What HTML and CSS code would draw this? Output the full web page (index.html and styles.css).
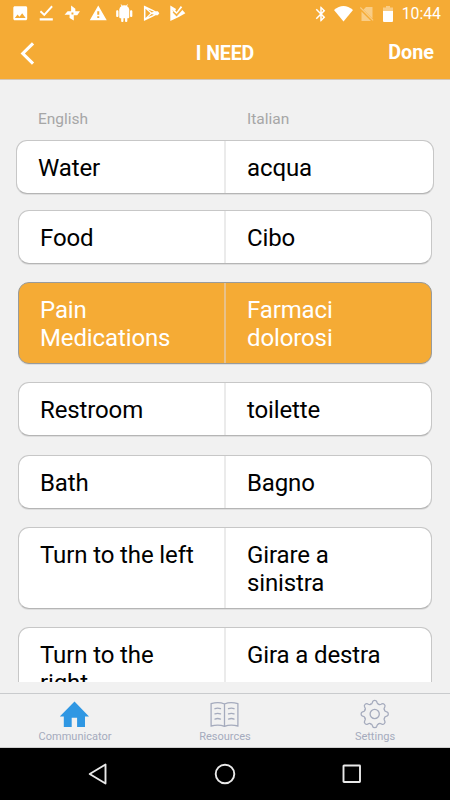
FILE: index.html
```html
<!DOCTYPE html>
<html lang="en">
<head>
<meta charset="utf-8">
<title>I NEED</title>
<link rel="stylesheet" href="styles.css">
</head>
<body>
<div class="phone">
  <header class="header">
    <div class="status">
      <div class="status-left">
        <svg viewBox="0 0 24 24"><path d="M21 19V5c0-1.100-.9-2-2-2H5c-1.100 0-2 .9-2 2v14c0 1.100.9 2 2 2h14c1.100 0 2-.9 2-2zM8.500 13.500l2.500 3.010L14.500 12l4.500 6H5l3.500-4.500z"/></svg>
        <svg viewBox="0 0 24 24"><path d="M3.500 18.500h17v3h-17zM5.300 8.500L3.600 10.300l5.900 5.700L20.500 4l-1.800-2-9.300 10.300z"/></svg>
        <svg viewBox="0 0 24 24"><path d="M10.500 2l5.500 4V9.500h6L18.500 14.500H14V21.500L8.500 18v-4H2l4-4.500h4.500zM11 11v2.500h2.500V11z" fill-rule="evenodd"/></svg>
        <svg viewBox="0 0 24 24"><path d="M1 21h22L12 2 1 21zm12.300-3h-2.600v-2h2.600v2zm0-4h-2.600v-4.500h2.600v4.500z"/></svg>
        <svg viewBox="0 0 24 24"><path d="M5.500 17c0 1 .8 1.600 1.600 1.600H8V22c0 2 3 2 3 0v-3.400h2V22c0 2 3 2 3 0v-3.400h.9c.9 0 1.600-.6 1.600-1.600V7h-13zM3 8c-.9 0-1.500.7-1.500 1.500v6c0 2 3 2 3 0v-6C4.500 8.700 3.900 8 3 8zm18 0c-.9 0-1.500.7-1.500 1.500v6c0 2 3 2 3 0v-6C22.500 8.700 21.900 8 21 8zM15.500 2.500l1.300-1.600-.7-.5-1.500 1.700a7 7 0 0 0-5.200 0L7.900.4l-.7.5 1.300 1.600A6 6 0 0 0 5.500 7h13a6 6 0 0 0-3-4.500z"/></svg>
        <svg viewBox="0 0 24 24"><path fill-rule="evenodd" d="M2.500 2L14 7.500l3.500 2h3L22.500 12l-2 2.500h-3L14 16.500 2.500 22zM4.500 6v12l6.500-6zM8 7.200l4.500 3.800 3-1zM8 16.800l4.500-3.800 3 1z"/></svg>
        <svg viewBox="0 0 24 24"><path d="M3 2l7.500 4.500L9 9l-3.500-.5L11 14.500l7-7.500L22.500 12 14 17 3 22z"/><path d="M8 7l3.200 3.400L16.500 2.500l2 1.700-7.300 8.700L6.500 9z"/><path class="cut" d="M6.500 10.500l4.700 4.700L18.500 7"/></svg>
      </div>
      <div class="status-right">
        <svg class="bt" viewBox="0 0 24 24"><path d="M17.710 7.710L12 2h-1v7.590L6.410 5 5 6.410 10.590 12 5 17.590 6.410 19 11 14.410V22h1l5.710-5.710-4.300-4.290 4.300-4.290zM13 5.830l1.880 1.880L13 9.590V5.830zm1.880 10.460L13 18.170v-3.760l1.880 1.880z"/></svg>
        <svg class="wifi" viewBox="0 0 19 16"><path d="M0 4Q9.500-4 19 4L9.500 15.500z"/></svg>
        <svg class="sim" viewBox="0 0 14 16"><path d="M6 1h6.500v11.500L3.500 3.500zM1.500 5.500L11 15H1.500zM.7 1.100L13.500 14l-.8.8L0 2z"/></svg>
        <svg class="battery" viewBox="0 0 10 16"><path opacity=".4" d="M3 0h4v1.500h3V5H0V1.500h3z"/><path d="M0 5h10v10a1 1 0 0 1-1 1H1a1 1 0 0 1-1-1z"/></svg>
        <span class="clock">10:44</span>
      </div>
    </div>
    <div class="nav">
      <svg class="back" viewBox="0 0 14 22"><path d="M12.300 1.300L2.500 11l9.800 9.700"/></svg>
      <h1 class="title">I NEED</h1>
      <span class="done">Done</span>
    </div>
  </header>
  <main class="list">
    <div class="labels"><span>English</span><span>Italian</span></div>
    <div class="card first"><p>Water</p><p>acqua</p></div>
    <div class="card"><p>Food</p><p>Cibo</p></div>
    <div class="card selected"><p>Pain Medications</p><p>Farmaci dolorosi</p></div>
    <div class="card"><p>Restroom</p><p>toilette</p></div>
    <div class="card"><p>Bath</p><p>Bagno</p></div>
    <div class="card"><p>Turn to the left</p><p>Girare a sinistra</p></div>
    <div class="card"><p>Turn to the right</p><p>Gira a destra</p></div>
  </main>
  <nav class="tabs">
    <div class="tab">
      <svg viewBox="0 0 30 30"><path fill="#2f97e3" d="M14.500 2.500L-.2 17.400h4V28h7.900v-9.200h5.400V28h7.900V17.400h4z"/></svg>
      <span>Communicator</span>
    </div>
    <div class="tab">
      <svg class="line" viewBox="0 0 30 30"><path d="M14.500 5Q8.500 2.300 1.100 4.700V27Q8.500 25 14.500 27.300 20.500 25 27.900 27V4.700Q20.500 2.300 14.500 5zV27M5 9.700Q7.500 8.500 10.500 9.700M5 14.900q2.500-1.200 5.500 0M5 20.100q2.500-1.200 5.500 0M18.500 9.700q3-1.200 5.500 0M18.500 14.900q3-1.200 5.500 0M18.500 20.100q3-1.200 5.500 0"/></svg>
      <span>Resources</span>
    </div>
    <div class="tab">
      <svg class="line" viewBox="-14.700 -15 30 30">
        <defs><path id="tooth" d="M-4.060-9.800C-2.600-9.700-2.400-11-2.100-12.200-1.800-13.200-1.300-13.600 0-13.600S1.800-13.200 2.100-12.200C2.400-11 2.600-9.700 4.060-9.800"/></defs>
        <use href="#tooth"/><use href="#tooth" transform="rotate(45)"/><use href="#tooth" transform="rotate(90)"/><use href="#tooth" transform="rotate(135)"/><use href="#tooth" transform="rotate(180)"/><use href="#tooth" transform="rotate(225)"/><use href="#tooth" transform="rotate(270)"/><use href="#tooth" transform="rotate(315)"/>
        <circle r="4.600"/>
      </svg>
      <span>Settings</span>
    </div>
  </nav>
  <footer class="system">
    <svg viewBox="0 0 24 24"><path d="M19.500 2.500v19L3.700 12z"/></svg>
    <svg viewBox="0 0 24 24"><circle cx="12" cy="12" r="9.300"/></svg>
    <svg viewBox="0 0 24 24"><rect x="3.500" y="3.500" width="16.500" height="16.500" rx=".5"/></svg>
  </footer>
</div>
</body>
</html>
```
FILE: styles.css
```css
* { box-sizing: border-box; }
body { margin: 0; font-family: Roboto, sans-serif; }
p, h1 { margin: 0; }
svg { display: block; flex: none; }
.phone {
  width: 450px;
  height: 800px;
  display: flex;
  flex-direction: column;
  background: #f1f1f1;
  overflow: hidden;
}
.header {
  flex: none;
  height: 80px;
  background: #f5ab35;
  border-bottom: 1px solid #d5c6b4;
  color: #fff;
}
.status {
  height: 27px;
  display: flex;
  justify-content: space-between;
  padding: 0 9px 0 10.700px;
}
.status svg { fill: #fff; }
.status-left { display: flex; align-items: center; gap: 7.700px; }
.status-left svg { width: 18.500px; height: 18.500px; }
.status-left .cut { fill: none; stroke: #f5ab35; stroke-width: 1.300; }
.status-right { display: flex; align-items: center; }
.bt { width: 18px; height: 18px; }
.wifi { width: 19px; height: 16px; margin-left: 3.500px; }
.status .sim { width: 14px; height: 16px; margin-left: 7.500px; fill: #f9cd86; }
.battery { width: 10px; height: 16px; margin-left: 9px; }
.clock { font-size: 15.800px; line-height: 28px; margin-left: 8.500px; }
.nav {
  height: 52px;
  display: grid;
  grid-template-columns: 1fr auto 1fr;
  align-items: center;
  padding: 0 16px 0 20px;
}
.back { width: 15px; height: 23px; fill: none; stroke: #fff; stroke-width: 3; }
.title { font-size: 19.500px; font-weight: 700; line-height: 24px; letter-spacing: -.1px; position: relative; left: -2px; top: 1px; }
.done { font-size: 19.800px; font-weight: 700; justify-self: end; line-height: 22px; margin-bottom: 1px; }
.list {
  flex: none;
  height: 602px;
  overflow: hidden;
  padding: 30px 16px 0;
}
.labels {
  display: grid;
  grid-template-columns: 209px 1fr;
  padding-left: 22px;
  height: 30px;
  font-size: 15.500px;
  line-height: 19px;
  color: #a6a6a6;
}
.card {
  display: grid;
  grid-template-columns: 205px 1fr;
  margin: 0 2px 18.200px;
  border: 1px solid #c7c7c7;
  border-bottom-color: #b5b5b5;
  border-radius: 11px;
  background: #fff;
  box-shadow: 0 1px 0 #dedede;
  color: #000;
  overflow: hidden;
  font-size: 24px;
  line-height: 28px;
  letter-spacing: -.12px;
}
.card p { padding: 13px 20px 11px 21px; }
.card p + p { border-left: 2px solid #ebebeb; padding-right: 40px; }
.card.first { margin: 0 0 16px; grid-template-columns: 207px 1fr; }
.card.selected { background: #f5ab35; border-color: #999b9b; color: #fff; }
.card.selected p + p { border-color: #e8c18a; padding-right: 60px; }
.tabs {
  flex: none;
  height: 55px;
  margin-top: 11px;
  display: grid;
  grid-template-columns: repeat(3, 1fr);
  border-top: 1px solid #c9cbcd;
  border-bottom: 1px solid #cfcfcf;
}
.tab {
  display: flex;
  flex-direction: column;
  align-items: center;
  padding-top: 5px;
  font-size: 11px;
  line-height: 15px;
  color: #a5abbd;
}
.tab svg { width: 30px; height: 30px; }
.line { fill: none; stroke: #a5abbd; stroke-width: 1.300; stroke-linecap: round; }
.system {
  flex: 1;
  background: #000;
  display: flex;
  justify-content: space-between;
  align-items: center;
  padding: 0 86px;
}
.system svg { width: 24px; height: 24px; fill: none; stroke: #e9e9e9; stroke-width: 1.900; stroke-linejoin: round; }
```
